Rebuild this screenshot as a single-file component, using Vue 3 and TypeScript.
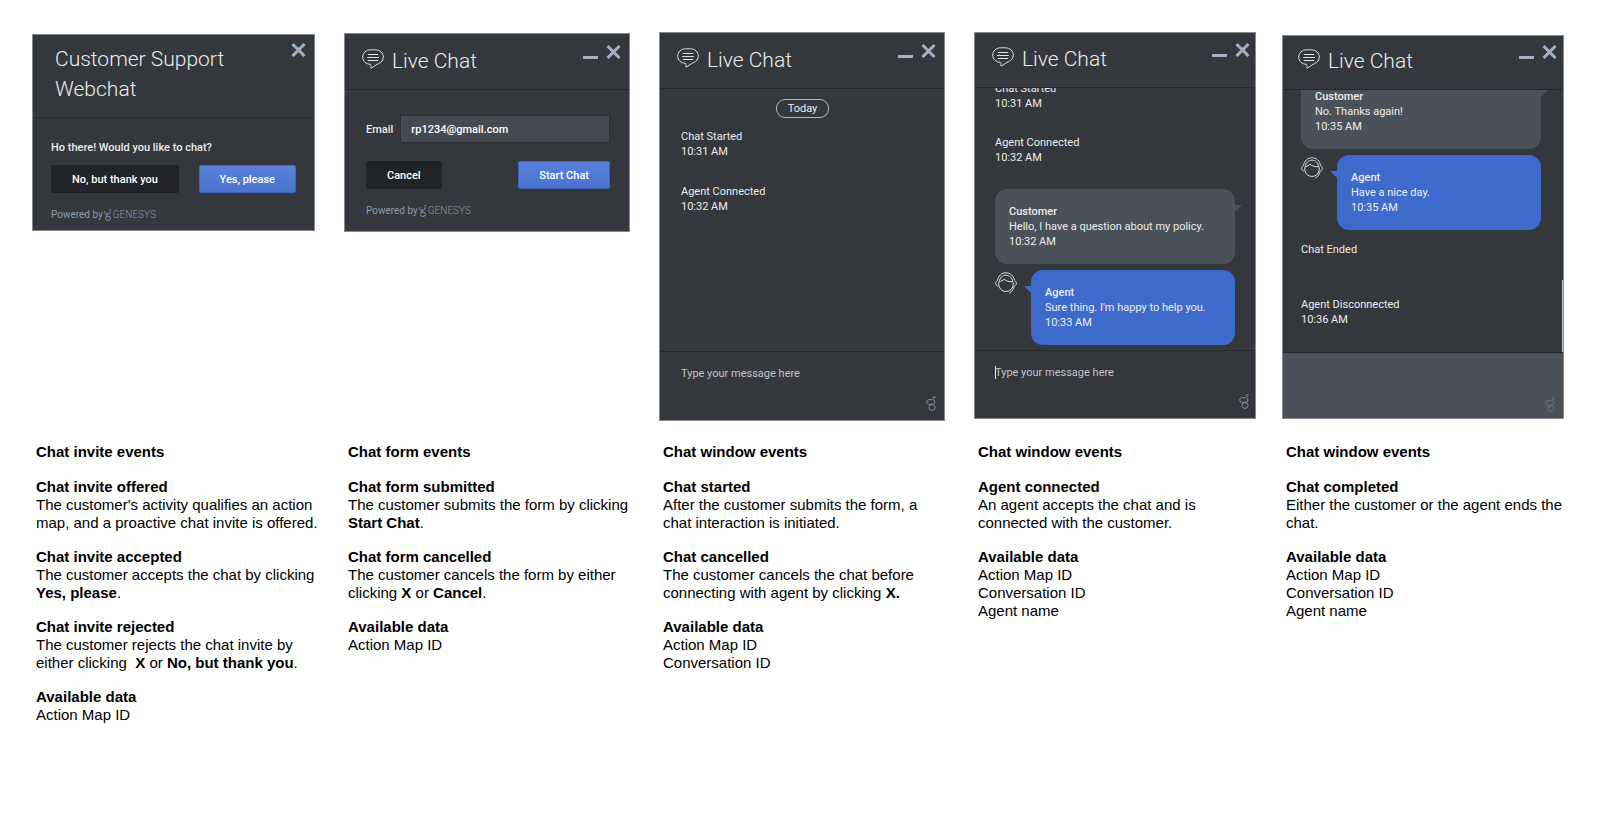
<script setup lang="ts">
interface TextPart {
  text: string
  strong?: boolean
}
interface EventNote {
  title: string
  lines: TextPart[][]
}
interface Stage {
  id: string
  kind: 'invite' | 'form' | 'window'
  heading: string
  notes: EventNote[]
}
interface ChatItem {
  type: 'day' | 'event' | 'customer' | 'agent'
  text: string
  time?: string
}

const t = (text: string): TextPart[] => [{ text }]
const data = (...names: string[]): EventNote => ({ title: 'Available data', lines: names.map(t) })

const stages: Stage[] = [
  {
    id: 'invite',
    kind: 'invite',
    heading: 'Chat invite events',
    notes: [
      { title: 'Chat invite offered', lines: [t("The customer's activity qualifies an action"), t('map, and a proactive chat invite is offered.')] },
      { title: 'Chat invite accepted', lines: [t('The customer accepts the chat by clicking'), [{ text: 'Yes, please', strong: true }, { text: '.' }]] },
      {
        title: 'Chat invite rejected',
        lines: [
          t('The customer rejects the chat invite by'),
          [{ text: 'either clicking  ' }, { text: 'X', strong: true }, { text: ' or ' }, { text: 'No, but thank you', strong: true }, { text: '.' }],
        ],
      },
      data('Action Map ID'),
    ],
  },
  {
    id: 'form',
    kind: 'form',
    heading: 'Chat form events',
    notes: [
      { title: 'Chat form submitted', lines: [t('The customer submits the form by clicking'), [{ text: 'Start Chat', strong: true }, { text: '.' }]] },
      {
        title: 'Chat form cancelled',
        lines: [
          t('The customer cancels the form by either'),
          [{ text: 'clicking ' }, { text: 'X', strong: true }, { text: ' or ' }, { text: 'Cancel', strong: true }, { text: '.' }],
        ],
      },
      data('Action Map ID'),
    ],
  },
  {
    id: 'started',
    kind: 'window',
    heading: 'Chat window events',
    notes: [
      { title: 'Chat started', lines: [t('After the customer submits the form, a'), t('chat interaction is initiated.')] },
      {
        title: 'Chat cancelled',
        lines: [t('The customer cancels the chat before'), [{ text: 'connecting with agent by clicking ' }, { text: 'X.', strong: true }]],
      },
      data('Action Map ID', 'Conversation ID'),
    ],
  },
  {
    id: 'connected',
    kind: 'window',
    heading: 'Chat window events',
    notes: [
      { title: 'Agent connected', lines: [t('An agent accepts the chat and is'), t('connected with the customer.')] },
      data('Action Map ID', 'Conversation ID', 'Agent name'),
    ],
  },
  {
    id: 'completed',
    kind: 'window',
    heading: 'Chat window events',
    notes: [
      { title: 'Chat completed', lines: [t('Either the customer or the agent ends the'), t('chat.')] },
      data('Action Map ID', 'Conversation ID', 'Agent name'),
    ],
  },
]

const chats: Record<string, ChatItem[]> = {
  started: [
    { type: 'day', text: 'Today' },
    { type: 'event', text: 'Chat Started', time: '10:31 AM' },
    { type: 'event', text: 'Agent Connected', time: '10:32 AM' },
  ],
  connected: [
    { type: 'event', text: 'Chat Started', time: '10:31 AM' },
    { type: 'event', text: 'Agent Connected', time: '10:32 AM' },
    { type: 'customer', text: 'Hello, I have a question about my policy.', time: '10:32 AM' },
    { type: 'agent', text: "Sure thing. I'm happy to help you.", time: '10:33 AM' },
  ],
  completed: [
    { type: 'customer', text: 'No. Thanks again!', time: '10:35 AM' },
    { type: 'agent', text: 'Have a nice day.', time: '10:35 AM' },
    { type: 'event', text: 'Chat Ended' },
    { type: 'event', text: 'Agent Disconnected', time: '10:36 AM' },
  ],
}
</script>

<template>
  <main class="board">
    <section v-for="stage in stages" :key="stage.id" class="stage">
      <div class="panel" :class="[stage.kind, stage.id]">
        <header class="bar">
          <svg v-if="stage.kind !== 'invite'" class="bubble-icon" viewBox="0 0 22 20" aria-hidden="true">
            <path d="M8.500 15.400C4 15.100.7 12.200.7 8.200.7 4 4 .8 8.600.8h4.800c4.600 0 7.900 3.200 7.900 7.300 0 3-1.900 5.300-4.700 6.500-2.600 1.100-4.600 2.700-6.600 4.200-.8.5-1.600.1-1.200-.8.300-.8.500-1.700-.3-2.600z" />
            <path d="M5.800 5.500h10.400M5.200 8.500h11.600M5.800 11.500h10.400" />
          </svg>
          <h2 class="name">{{ stage.kind === 'invite' ? 'Customer Support Webchat' : 'Live Chat' }}</h2>
          <button v-if="stage.kind !== 'invite'" class="tool" type="button" aria-label="Minimize">
            <svg viewBox="0 0 15 14" aria-hidden="true"><path d="M0 12.500h15" /></svg>
          </button>
          <button class="tool" type="button" aria-label="Close">
            <svg viewBox="0 0 15 14" aria-hidden="true"><path d="M1.500 1l12 12M13.500 1l-12 12" /></svg>
          </button>
        </header>

        <div v-if="stage.kind === 'invite'" class="body">
          <p class="question">Ho there! Would you like to chat?</p>
          <div class="actions">
            <button class="btn dark" type="button">No, but thank you</button>
            <button class="btn blue" type="button">Yes, please</button>
          </div>
        </div>

        <form v-else-if="stage.kind === 'form'" class="body" @submit.prevent>
          <div class="field">
            <label for="email">Email</label>
            <input id="email" type="email" value="rp1234@gmail.com" />
          </div>
          <div class="actions">
            <button class="btn dark" type="button">Cancel</button>
            <button class="btn blue" type="submit">Start Chat</button>
          </div>
        </form>

        <template v-else>
          <div class="log">
            <template v-for="(item, i) in chats[stage.id]" :key="i">
              <p v-if="item.type === 'day'" class="day">{{ item.text }}</p>
              <p v-else-if="item.type === 'event'" class="event">{{ item.text }}<br />{{ item.time }}</p>
              <div v-else class="row" :class="item.type">
                <svg v-if="item.type === 'agent'" class="avatar" viewBox="0 0 22 22" aria-hidden="true">
                  <path d="M4.200 9.600C3.800 10.400 3.700 11.300 3.700 12.200a7.300 7.300 0 0 0 14.600 0c0-.9-.1-1.800-.5-2.600" />
                  <path d="M2.500 8.500C3.300 3.800 6.600.8 11 .8s7.700 3 8.500 7.700" />
                  <path d="M4.200 9.600C4.900 5.700 7.500 3.200 11 3.200s6.100 2.500 6.800 6.400" />
                  <path d="M2.500 8.500C1.300 9.200.6 10.200.6 11.400s.8 2.200 2.200 2.800M19.500 8.500c1.200.7 1.900 1.700 1.900 2.900s-.8 2.200-2.200 2.800c-.6 3.200-2.200 5.500-4.900 6.900" />
                  <path d="M4.200 9.600C6.300 9.300 7.900 8.500 9 7.200c2.200 2 5.200 2.800 8.800 2.400" />
                </svg>
                <div class="bubble">
                  <svg class="tail" viewBox="0 0 7 7" aria-hidden="true"><path d="M0 0h7L0 7z" /></svg>
                  <strong>{{ item.type === 'agent' ? 'Agent' : 'Customer' }}</strong>
                  <span>{{ item.text }}</span>
                  <span>{{ item.time }}</span>
                </div>
              </div>
            </template>
          </div>
          <div class="compose">
            <span v-if="stage.id === 'connected'" class="caret"></span>
            <textarea
              rows="2"
              aria-label="Message"
              :placeholder="stage.id === 'completed' ? '' : 'Type your message here'"
              :disabled="stage.id === 'completed'"
            ></textarea>
            <svg class="mark" viewBox="0 0 10 15" aria-hidden="true">
              <rect x=".7" y="3.700" width="8.200" height="4.600" rx="2.200" />
              <ellipse cx="6" cy="11.500" rx="3.100" ry="2.900" />
              <circle cx="8.200" cy="1.500" r=".9" />
            </svg>
          </div>
        </template>

        <footer v-if="stage.kind !== 'window'" class="powered">
          <span>Powered by</span>
          <svg viewBox="0 0 8 12" aria-hidden="true">
            <path d="M.6 2.200c0 2 .8 2.900 2.400 2.900h1c1.300 0 2-.9 2-2.300V2.200M3.500 5.200C2 5.200 1.600 7 3 7.200h1.400M5.500.8h1.800" />
            <ellipse cx="4" cy="9.300" rx="2.500" ry="2.100" />
          </svg>
          <span class="brand">GENESYS</span>
        </footer>
      </div>

      <div class="caption">
        <h3>{{ stage.heading }}</h3>
        <div v-for="note in stage.notes" :key="note.title" class="note">
          <h4>{{ note.title }}</h4>
          <p v-for="(line, i) in note.lines" :key="i">
            <component :is="part.strong ? 'strong' : 'span'" v-for="(part, j) in line" :key="j">{{ part.text }}</component>
          </p>
        </div>
      </div>
    </section>
  </main>
</template>

<style>
body {
  margin: 0;
  background: #fff;
}
</style>

<style scoped>
h2,
h3,
h4,
p {
  margin: 0;
  font-size: inherit;
}
.board {
  display: grid;
  grid-template-columns: 286fr 289fr 289fr 282fr 282fr;
  grid-template-rows: auto auto;
  column-gap: 26px;
  row-gap: 22px;
  padding: 32px 36px 32px 32px;
}
.stage {
  display: grid;
  grid-row: span 2;
  grid-template-rows: subgrid;
  min-width: 0;
}

/* Chat widget */
.panel {
  box-sizing: border-box;
  align-self: start;
  display: flex;
  flex-direction: column;
  border: 1px solid #85888c;
  background: #34373c;
  color: #eceded;
  font: 11px/15px Roboto, "Liberation Sans", sans-serif;
}
.invite,
.form,
.started {
  margin-right: 3px;
}
.invite {
  margin-top: 2px;
}
.form {
  margin-top: 1px;
}
.completed {
  margin-top: 3px;
}
.bar {
  box-sizing: border-box;
  display: flex;
  align-items: flex-start;
  gap: 8px;
  min-height: 56px;
  padding: 11px 8px 0 17px;
  border-bottom: 1px solid #25282b;
}
.connected .bar {
  min-height: 55px;
  padding: 10px 5px 0 17px;
}
.completed .bar {
  min-height: 54px;
  padding: 9px 6px 0 15px;
}
.bubble-icon {
  width: 22px;
  height: 20px;
  margin-top: 4px;
  fill: none;
  stroke: #e2e4e6;
}
.name {
  flex: 1;
  margin-top: 1px;
  font-size: 21px;
  font-weight: 300;
  line-height: 30px;
}
.invite .bar {
  min-height: 84px;
  padding: 8px 8px 0 22px;
  border-bottom: 2px solid #2c2f33;
}
.tool {
  padding: 0;
  border: 0;
  background: none;
  line-height: 0;
}
.tool svg {
  width: 15px;
  height: 14px;
  fill: none;
  stroke: #a4b1c4;
  stroke-width: 3;
}
.body {
  display: flex;
  flex-direction: column;
  padding: 25px 19px 0 21px;
}
.invite .body {
  gap: 10px;
  padding: 21px 18px 0;
}
.form .body {
  gap: 18px;
}
.question,
.field,
.btn {
  font-weight: 500;
}
.actions {
  display: flex;
  justify-content: space-between;
}
.btn {
  height: 28px;
  padding: 0 20px;
  border: 1px solid #222327;
  border-radius: 2px;
  color: #fff;
  font-family: inherit;
  font-size: 11px;
}
.dark {
  background: #222327;
}
.blue {
  border-color: #3f69c1;
  background: linear-gradient(#5781dc, #4b74ce);
}
.field {
  display: flex;
  align-items: center;
  gap: 7px;
}
.field input {
  box-sizing: border-box;
  flex: 1;
  min-width: 0;
  height: 28px;
  padding: 0 10px;
  border: 1px solid #2b2e32;
  border-radius: 1px;
  background: #464a50;
  color: #fff;
  font: inherit;
}
.powered {
  display: flex;
  align-items: center;
  gap: 1px;
  padding: 14px 18px 8px;
  color: #8e9aab;
  font-size: 10px;
}
.form .powered {
  padding: 14px 21px 13px;
}
.powered svg {
  width: 8px;
  height: 12px;
  fill: none;
  stroke: #8e9aab;
}
.brand {
  font-weight: 300;
}

/* Conversation */
.log {
  position: relative;
  box-sizing: border-box;
  display: flex;
  flex-direction: column;
  height: 262px;
  padding: 10px 20px 0 21px;
  overflow: hidden;
}
.connected .log {
  justify-content: flex-end;
  padding: 0 20px 5px;
}
.completed .log {
  justify-content: flex-end;
  padding: 0 22px 0 18px;
}
.completed .log::after {
  position: absolute;
  right: 0;
  bottom: 0;
  width: 1px;
  height: 72px;
  background: #c9cbcd;
  content: "";
}
.day {
  align-self: center;
  margin-bottom: 11px;
  padding: 1px 11px;
  border: 1px solid #b5b7b9;
  border-radius: 9px;
}
.event {
  flex: none;
  min-height: 30px;
  margin-bottom: 25px;
}
.connected .event {
  margin-bottom: 24px;
}
.row {
  display: flex;
  flex: none;
  align-items: flex-start;
  justify-content: space-between;
  margin-bottom: 6px;
}
.row:last-child {
  margin-bottom: 0;
}
.row + .event {
  margin-top: 6px;
}
.avatar {
  width: 22px;
  height: 22px;
  margin-top: 2px;
  fill: none;
  stroke: #dcdddf;
}
.bubble {
  position: relative;
  box-sizing: border-box;
  display: flex;
  flex: 1;
  flex-direction: column;
  padding: 15px 14px;
  border-radius: 12px;
  background: #4b5159;
}
.agent .bubble {
  margin-left: 14px;
  background: #3e6bcb;
}
.bubble strong {
  font-weight: 500;
}
.tail {
  position: absolute;
  top: 16px;
  left: 100%;
  width: 7px;
  height: 7px;
  fill: #4b5159;
}
.agent .tail {
  right: 100%;
  left: auto;
  fill: #3e6bcb;
  transform: scaleX(-1);
}
.compose {
  position: relative;
  box-sizing: border-box;
  display: flex;
  min-height: 69px;
  padding: 14px 8px 0 21px;
  border-top: 1px solid #25282b;
}
.connected .compose {
  min-height: 68px;
  padding: 14px 6px 0 20px;
}
.completed .compose {
  min-height: 66px;
  background: #4b5159;
}
.compose textarea {
  flex: 1;
  min-width: 0;
  padding: 0;
  border: 0;
  background: none;
  color: inherit;
  font: inherit;
  resize: none;
}
.compose textarea::placeholder {
  color: #c3c6ca;
}
.caret {
  position: absolute;
  top: 15px;
  left: 20px;
  width: 1px;
  height: 13px;
  background: #eceded;
}
.mark {
  align-self: flex-end;
  width: 10px;
  height: 15px;
  margin-bottom: 9px;
  fill: none;
  stroke: #8492a5;
}
.completed .mark {
  margin-bottom: 6px;
  stroke: #6b737d;
}

/* Event notes */
.caption {
  padding-left: 4px;
  color: #000;
  font: 15px/18px "Liberation Sans", Arial, sans-serif;
  white-space: pre-wrap;
}
.caption h3 {
  margin-bottom: 17px;
}
.note {
  margin-bottom: 16px;
}
</style>
